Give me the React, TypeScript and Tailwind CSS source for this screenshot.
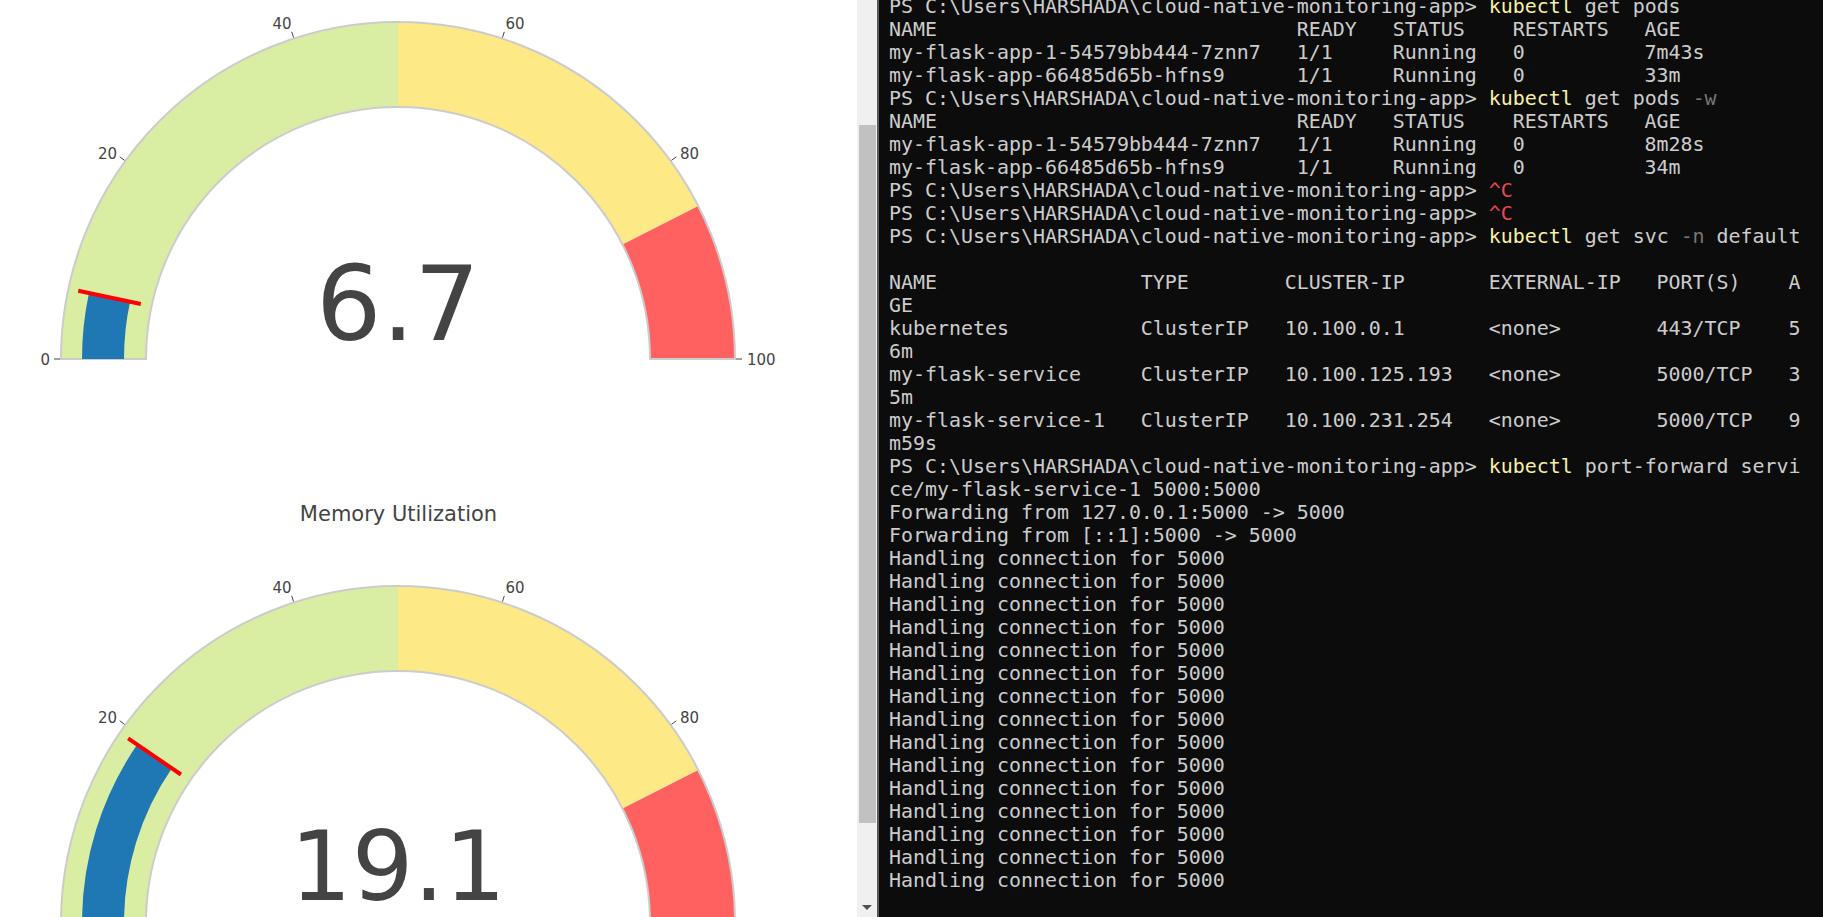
import React from "react";

const CX = 398;
const R_OUT = 337;
const R_IN = 252;
const PLOT_FONT = "'DejaVu Sans', Verdana, sans-serif";

type Seg = { t: string; c?: "y" | "g" | "r" };

const pt = (v: number, r: number, cy: number) => {
  const a = Math.PI * (1 - v / 100);
  return [CX + r * Math.cos(a), cy - r * Math.sin(a)];
};

// annular sector from value v1 to v2
const sector = (v1: number, v2: number, r1: number, r2: number, cy: number) => {
  const [ax, ay] = pt(v1, r2, cy);
  const [bx, by] = pt(v2, r2, cy);
  const [cx2, cy2] = pt(v2, r1, cy);
  const [dx, dy] = pt(v1, r1, cy);
  return `M${ax} ${ay} A${r2} ${r2} 0 0 1 ${bx} ${by} L${cx2} ${cy2} A${r1} ${r1} 0 0 0 ${dx} ${dy} Z`;
};

const labels = [
  { v: 0, dx: -348, dy: 5, anchor: "end" },
  { v: 20, dx: -281, dy: -201, anchor: "end" },
  { v: 40, dx: -116, dy: -331, anchor: "middle" },
  { v: 60, dx: 117, dy: -331, anchor: "middle" },
  { v: 80, dx: 282, dy: -201, anchor: "start" },
  { v: 100, dx: 349, dy: 5, anchor: "start" },
];

function Gauge({ value, cy, height, numSize, numY }: { value: number; cy: number; height: number; numSize: number; numY: number }) {
  const [t1x, t1y] = pt(value, 263, cy);
  const [t2x, t2y] = pt(value, 327, cy);
  return (
    <svg width={857} height={height} className="block shrink-0 overflow-visible" style={{ fontFamily: PLOT_FONT }}>
      <path d={sector(0, 50, R_IN, R_OUT, cy)} fill="#daeea3" />
      <path d={sector(50, 85, R_IN, R_OUT, cy)} fill="#fde985" />
      <path d={sector(85, 100, R_IN, R_OUT, cy)} fill="#ff6060" />
      <path d={sector(0, 100, R_IN, R_OUT, cy)} fill="none" stroke="#cccccc" strokeWidth={2} />
      <path d={sector(0, value, 274, 316, cy)} fill="#1f77b4" />
      <line x1={t1x} y1={t1y} x2={t2x} y2={t2y} stroke="#ff0000" strokeWidth={4} />
      {labels.map((l) => {
        const [ax, ay] = pt(l.v, R_OUT + 1, cy);
        const [bx, by] = pt(l.v, R_OUT + 7, cy);
        return (
          <g key={l.v}>
            <line x1={ax} y1={ay} x2={bx} y2={by} stroke="#444" strokeWidth={1} />
            <text x={CX + l.dx} y={cy + l.dy + 0.5} textAnchor={l.anchor as any} fontSize={15} fill="#444">
              {l.v}
            </text>
          </g>
        );
      })}
      <text x={CX} y={numY} textAnchor="middle" fontSize={numSize} fill="#444">
        {value}
      </text>
    </svg>
  );
}

const P = "PS C:\\Users\\HARSHADA\\cloud-native-monitoring-app> ";
const pad = (s: string, n: number) => s.padEnd(n);

const podHead = pad("NAME", 34) + pad("READY", 8) + pad("STATUS", 10) + pad("RESTARTS", 11) + "AGE";
const pod = (name: string, age: string) => pad(name, 34) + pad("1/1", 8) + pad("Running", 10) + pad("0", 11) + age;
const svc = (a: string, b: string, c: string, d: string, e: string, f: string) =>
  pad(a, 21) + pad(b, 12) + pad(c, 17) + pad(d, 14) + pad(e, 11) + f;

const lines: Seg[][] = [
  [{ t: P }, { t: "kubectl", c: "y" }, { t: " get pods" }],
  [{ t: podHead }],
  [{ t: pod("my-flask-app-1-54579bb444-7znn7", "7m43s") }],
  [{ t: pod("my-flask-app-66485d65b-hfns9", "33m") }],
  [{ t: P }, { t: "kubectl", c: "y" }, { t: " get pods " }, { t: "-w", c: "g" }],
  [{ t: podHead }],
  [{ t: pod("my-flask-app-1-54579bb444-7znn7", "8m28s") }],
  [{ t: pod("my-flask-app-66485d65b-hfns9", "34m") }],
  [{ t: P }, { t: "^C", c: "r" }],
  [{ t: P }, { t: "^C", c: "r" }],
  [{ t: P }, { t: "kubectl", c: "y" }, { t: " get svc " }, { t: "-n", c: "g" }, { t: " default" }],
  [{ t: "" }],
  [{ t: svc("NAME", "TYPE", "CLUSTER-IP", "EXTERNAL-IP", "PORT(S)", "A") }],
  [{ t: "GE" }],
  [{ t: svc("kubernetes", "ClusterIP", "10.100.0.1", "<none>", "443/TCP", "5") }],
  [{ t: "6m" }],
  [{ t: svc("my-flask-service", "ClusterIP", "10.100.125.193", "<none>", "5000/TCP", "3") }],
  [{ t: "5m" }],
  [{ t: svc("my-flask-service-1", "ClusterIP", "10.100.231.254", "<none>", "5000/TCP", "9") }],
  [{ t: "m59s" }],
  [{ t: P }, { t: "kubectl", c: "y" }, { t: " port-forward servi" }],
  [{ t: "ce/my-flask-service-1 5000:5000" }],
  [{ t: "Forwarding from 127.0.0.1:5000 -> 5000" }],
  [{ t: "Forwarding from [::1]:5000 -> 5000" }],
  ...Array.from({ length: 15 }, () => [{ t: "Handling connection for 5000" }]),
];

const segColor = { y: "text-[#f9f1a5]", g: "text-[#767676]", r: "text-[#e74856]" };

export default function App() {
  return (
    <div className="flex h-[917px] w-[1823px] overflow-hidden bg-white">
      {/* browser page with plotly gauges */}
      <div className="flex w-[857px] shrink-0 flex-col overflow-hidden bg-white">
        <Gauge value={6.7} cy={359} height={400} numSize={103} numY={340} />
        <div className="mt-[100px] h-[28px] shrink-0 text-center text-[21px] leading-[28px] text-[#444]" style={{ fontFamily: PLOT_FONT }}>
          <span className="relative left-[-30px]">Memory Utilization</span>
        </div>
        <Gauge value={19.1} cy={395} height={420} numSize={97} numY={372} />
      </div>

      {/* scrollbar */}
      <div className="relative w-[20px] shrink-0 bg-[#f0f0f0]">
        <div className="ml-[2px] mt-[125px] h-[698px] w-[17px] bg-[#c1c1c1]" />
        <div className="absolute bottom-[7px] left-[5px] h-0 w-0 border-x-[5px] border-t-[5px] border-x-transparent border-t-[#505050]" />
      </div>

      {/* terminal */}
      <div className="flex-1 border-l-2 border-[#5a5a5a] bg-[#0c0c0c] pl-[10px]">
        <div className="mt-[-5px] whitespace-pre text-[19.93px] leading-[23px] text-[#cccccc]" style={{ fontFamily: "'DejaVu Sans Mono', monospace" }}>
          {lines.map((l, i) => (
            <div key={i} className="h-[23px]">
              {l.map((s, j) => (
                <span key={j} className={s.c ? segColor[s.c] : undefined}>
                  {s.t}
                </span>
              ))}
            </div>
          ))}
        </div>
      </div>
    </div>
  );
}
